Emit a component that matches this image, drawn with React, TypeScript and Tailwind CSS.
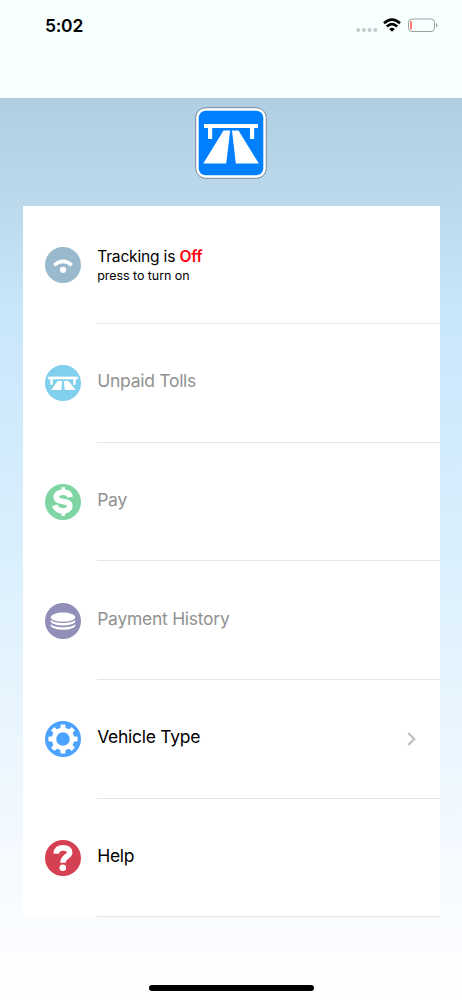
import type { ReactNode } from 'react';

function Tolls() {
  return (
    <>
      <rect x="3.2" y="11.6" width="29.6" height="2.7" />
      <rect x="5.3" y="14" width="2.5" height="5.8" />
      <rect x="28.2" y="14" width="2.5" height="5.8" />
      <path d="M12.6 16H17.2L16.4 25H6.2Z M18.8 16H23.4L30.8 25H19.8Z" />
    </>
  );
}

function Wifi() {
  return (
    <>
      <circle cx="18" cy="22.8" r="3.1" />
      <path d="M9.2 18.2Q18 10.6 26.8 18.2" fill="none" stroke="white" strokeWidth="3.5" />
    </>
  );
}

function Dollar() {
  return (
    <>
      <rect x="16.6" y="3.2" width="3.4" height="5" />
      <rect x="16.6" y="27.5" width="3.4" height="4.5" />
      <path
        d="M25.4 13.2C24.5 9.2 21.8 8.1 18.2 8.1C14.5 8.1 11.3 9.7 11.3 12.9C11.3 19.6 24.8 15.6 24.8 22C24.8 25.4 21.6 26.9 17.9 26.9C13.8 26.9 11 25.4 9.9 21.2"
        fill="none"
        stroke="white"
        strokeWidth="5.6"
      />
    </>
  );
}

function Coins() {
  return (
    <>
      <ellipse cx="18" cy="14.2" rx="12.2" ry="4.6" />
      <path d="M5.8 16.7C8.8 21.1 27.2 21.1 30.2 16.7V18.7C27.2 23.7 8.8 23.7 5.8 18.7Z" />
      <path d="M5.8 20.9C8.8 25.3 27.2 25.3 30.2 20.9V22.9C27.2 27.9 8.8 27.9 5.8 22.9Z" />
    </>
  );
}

function Gear() {
  return (
    <>
      <circle cx="18" cy="18" r="9" fill="none" stroke="white" strokeWidth="4.4" />
      {[0, 45, 90, 135, 180, 225, 270, 315].map((angle) => (
        <path key={angle} d="M15.2 9L15.7 3.4H20.3L20.8 9Z" transform={`rotate(${angle} 18 18)`} />
      ))}
    </>
  );
}

function Question() {
  return (
    <>
      <path
        d="M11.2 13.6C11.5 9.6 14.3 7.9 18.3 7.9C22.3 7.9 24.7 9.7 24.7 12.4C24.7 16.6 18 16.2 18 22.8"
        fill="none"
        stroke="white"
        strokeWidth="5.6"
      />
      <circle cx="17.8" cy="27.8" r="3.3" />
    </>
  );
}

function Row({ color, icon, chevron, children }: { color: string; icon: ReactNode; chevron?: boolean; children: ReactNode }) {
  return (
    <li className="flex h-[118.6px] items-center pl-[22.2px]">
      <svg viewBox="0 0 36 36" className="size-[36px] shrink-0" fill="white">
        <circle cx="18" cy="18" r="18" fill={color} />
        {icon}
      </svg>
      <div className="ml-[16.5px] flex h-full flex-1 items-center justify-between border-b border-[#e5e5e7] pr-6 pb-[3px]">
        {children}
        {chevron && (
          <svg viewBox="0 0 9 14" className="mt-[3px] h-3.5 w-[9px]" fill="none" stroke="#bfbfc1" strokeWidth="2.3">
            <path d="M1.2 1L7.2 7L1.2 13" />
          </svg>
        )}
      </div>
    </li>
  );
}

const label = 'text-[17.5px] leading-6 tracking-[-0.27px] whitespace-nowrap';

export default function App() {
  return (
    <div className="flex h-[1000px] w-[462px] flex-col bg-white font-['Inter','Liberation_Sans',sans-serif] text-black">
      <header className="flex h-[98px] shrink-0 items-start justify-between bg-[#f8ffff] pr-6 pl-[45px]">
        <span className="mt-[14px] text-[17.5px] leading-6 font-semibold tracking-[-0.25px]">5:02</span>
        <div className="mt-[17px] flex items-center">
          <svg viewBox="0 0 22 6" className="mt-[9px] h-1.5 w-[22px]" fill="#c5cacb">
            <circle cx="2.2" cy="3" r="2" />
            <circle cx="7.9" cy="3" r="2" />
            <circle cx="13.6" cy="3" r="2" />
            <circle cx="19.3" cy="3" r="2" />
          </svg>
          <svg viewBox="0 0 18 14" className="ml-[5px] h-3.5 w-[18px]" fill="none" stroke="black" strokeWidth="2.7">
            <path d="M1 5.2Q9 -2.1 17 5.2 M3.8 8.4Q9 3.9 14.2 8.4" />
            <path d="M6.2 11Q9 8.6 11.8 11L9 13.8Z" fill="black" stroke="none" />
          </svg>
          <svg viewBox="0 0 31 16" className="ml-[6px] h-4 w-[31px]" fill="none">
            <rect x="1.5" y="2" width="26" height="12.5" rx="3.5" stroke="#9b9fa0" />
            <rect x="3" y="4" width="2" height="8.5" rx=".8" fill="#ff7770" />
            <path d="M29 6V10.5Q30.5 9.8 30.5 8.25T29 6Z" fill="#9b9fa0" />
          </svg>
        </div>
      </header>
      <main className="flex flex-1 flex-col items-center border-t border-[#b4c9d4] bg-[linear-gradient(180deg,#b0cfe3_0%,#bcd9eb_11%,#c9e6f9_23%,#cfeafc_33%,#d9effd_49%,#e6f4fe_65%,#f4faff_83%,#fafcff_92%,#fff_100%)]">
        <svg viewBox="0 0 72 72" className="mt-2 size-[72px] shrink-0" fill="white">
          <rect x=".7" y=".7" width="70.6" height="70.6" rx="10" stroke="#778b99" />
          <rect x="3.7" y="3.7" width="64.6" height="64.6" rx="7" fill="#0080ff" />
          <rect x="9" y="17" width="54" height="4" />
          <rect x="13" y="21" width="4.2" height="11" />
          <rect x="55" y="21" width="4.2" height="11" />
          <path d="M28.5 23.5H35.2L31.2 56.5H8.3Z M37 23.5H43.5L63.8 56.5H40.8Z" />
        </svg>
        <ul className="mt-[26.6px] w-[417px] bg-white">
          <Row color="#99b9cc" icon={<Wifi />}>
            <div className="pt-[6px]">
              <p className="text-[15.6px] leading-[20px] tracking-[-0.2px]">
                Tracking is <span className="font-semibold text-[#fc000c]">Off</span>
              </p>
              <p className="text-[12.5px] leading-[18px] tracking-[-0.06px]">press to turn on</p>
            </div>
          </Row>
          <Row color="#80cfed" icon={<Tolls />}>
            <span className={`${label} text-[#919191]`}>Unpaid Tolls</span>
          </Row>
          <Row color="#80d5a4" icon={<Dollar />}>
            <span className={`${label} text-[#919191]`}>Pay</span>
          </Row>
          <Row color="#918eb7" icon={<Coins />}>
            <span className={`${label} text-[#919191]`}>Payment History</span>
          </Row>
          <Row color="#4ba2ff" icon={<Gear />} chevron>
            <span className={label}>Vehicle Type</span>
          </Row>
          <Row color="#d64053" icon={<Question />}>
            <span className={label}>Help</span>
          </Row>
        </ul>
        <div className="mt-auto mb-[9px] h-[6px] w-[165px] rounded-full bg-black" />
      </main>
    </div>
  );
}
